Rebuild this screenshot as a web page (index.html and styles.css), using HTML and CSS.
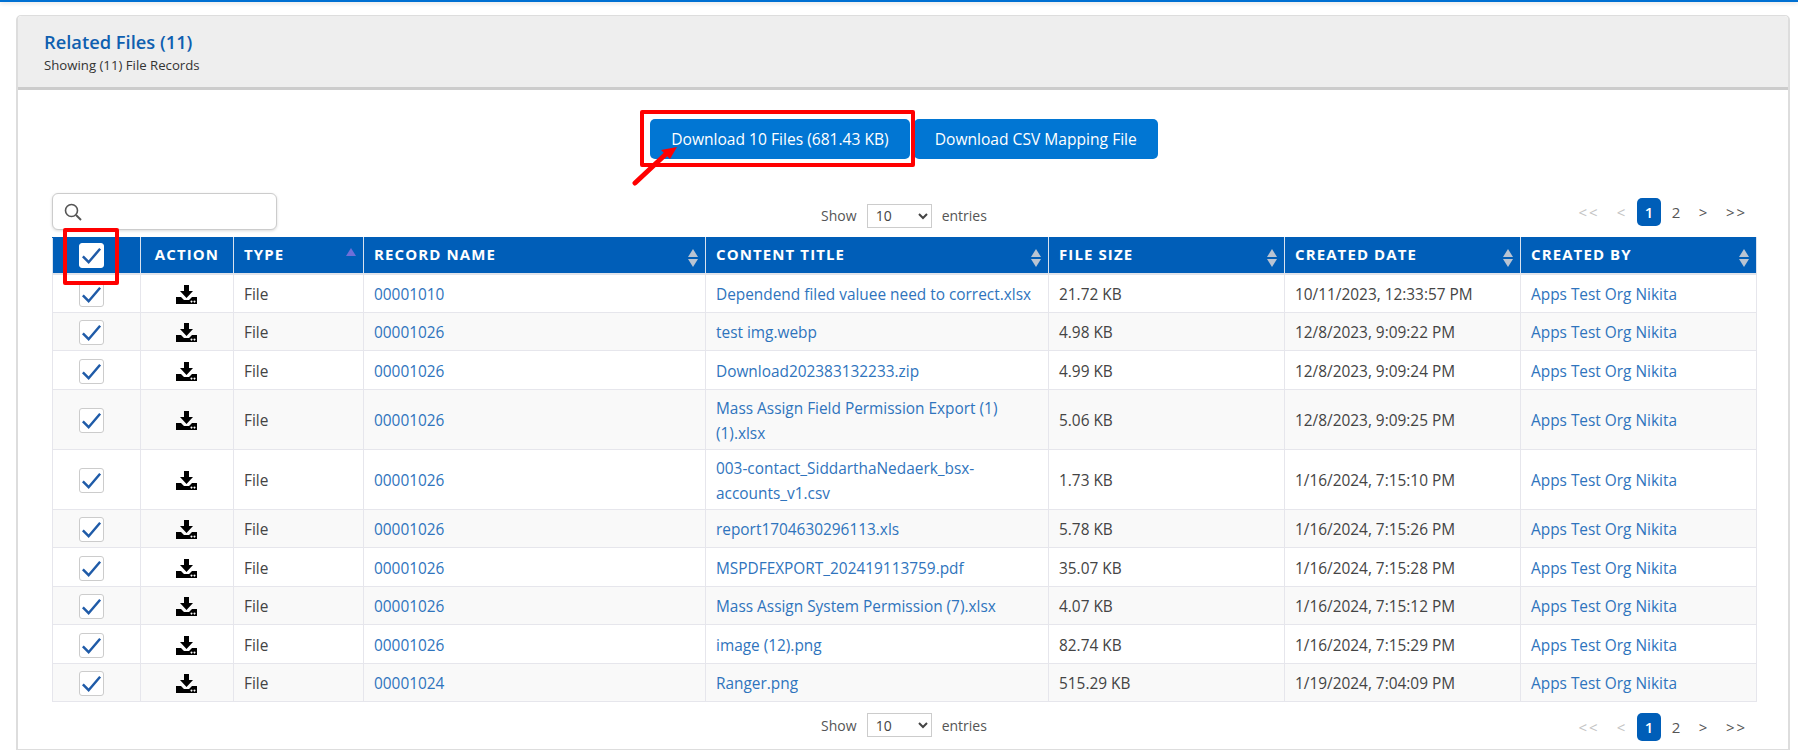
FILE: index.html
```html
<!DOCTYPE html>
<html lang="en">
<head>
<meta charset="utf-8">
<title>Related Files</title>
<link rel="stylesheet" href="styles.css">
</head>
<body>
<svg class="defs" width="0" height="0" aria-hidden="true">
  <symbol id="dl" viewBox="0 0 21 19">
    <path d="M8 0h5v6h4l-6.500 7L4 6h4z"/>
    <path fill-rule="evenodd" d="M0 12h5l3 3h5l3-3h5v7H0zM15.500 15.500a1 1 0 1 0 .01 0zM18.500 15.500a1 1 0 1 0 .01 0z"/>
  </symbol>
  <symbol id="chk" viewBox="0 0 24 24">
    <path d="M3 13l6 6L21 5" fill="none" stroke="currentColor" stroke-width="2.600"/>
  </symbol>
</svg>
<div class="topbar"></div>
<main class="card">
  <header class="card-head">
    <h1 class="card-title">Related Files (11)</h1>
    <p class="card-sub">Showing (11) File Records</p>
  </header>
  <div class="card-body">
    <div class="actions">
      <button class="btn" type="button">Download 10 Files (681.43 KB)</button>
      <button class="btn" type="button">Download CSV Mapping File</button>
    </div>
    <div class="toolbar">
      <div class="search">
        <svg class="search-icon" viewBox="0 0 18 18" width="18" height="18"><circle cx="7.500" cy="7.500" r="6" fill="none" stroke="#555" stroke-width="1.600"/><path d="M12 12l5 5" stroke="#555" stroke-width="2"/></svg>
      </div>
      <div class="length length-top"><span>Show</span><select class="length-select"><option>10</option></select><span>entries</span></div>
      <nav class="pager"><span class="pg off wide">&lt;&lt;</span><span class="pg off">&lt;</span><span class="pg cur">1</span><span class="pg">2</span><span class="pg arrow">&gt;</span><span class="pg arrow wide">&gt;&gt;</span></nav>
    </div>
    <table class="grid">
      <colgroup><col class="c1"><col class="c2"><col class="c3"><col class="c4"><col class="c5"><col class="c6"><col class="c6"><col class="c6"></colgroup>
      <thead>
        <tr>
          <th class="ctr chk"><span class="box head-box"><svg><use href="#chk"/></svg></span></th>
          <th class="ctr">ACTION</th>
          <th class="sorted">TYPE</th>
          <th class="sort">RECORD NAME</th>
          <th class="sort">CONTENT TITLE</th>
          <th class="sort">FILE SIZE</th>
          <th class="sort">CREATED DATE</th>
          <th class="sort">CREATED BY</th>
        </tr>
      </thead>
      <tbody>
        <tr><td class="ctr chk"><span class="box"><svg><use href="#chk"/></svg></span></td><td class="ctr"><svg class="dl"><use href="#dl"/></svg></td><td>File</td><td><a href="#">00001010</a></td><td><a href="#">Dependend filed valuee need to correct.xlsx</a></td><td>21.72 KB</td><td>10/11/2023, 12:33:57 PM</td><td><a href="#">Apps Test Org Nikita</a></td></tr>
        <tr><td class="ctr chk"><span class="box"><svg><use href="#chk"/></svg></span></td><td class="ctr"><svg class="dl"><use href="#dl"/></svg></td><td>File</td><td><a href="#">00001026</a></td><td><a href="#">test img.webp</a></td><td>4.98 KB</td><td>12/8/2023, 9:09:22 PM</td><td><a href="#">Apps Test Org Nikita</a></td></tr>
        <tr><td class="ctr chk"><span class="box"><svg><use href="#chk"/></svg></span></td><td class="ctr"><svg class="dl"><use href="#dl"/></svg></td><td>File</td><td><a href="#">00001026</a></td><td><a href="#">Download202383132233.zip</a></td><td>4.99 KB</td><td>12/8/2023, 9:09:24 PM</td><td><a href="#">Apps Test Org Nikita</a></td></tr>
        <tr><td class="ctr chk"><span class="box"><svg><use href="#chk"/></svg></span></td><td class="ctr"><svg class="dl"><use href="#dl"/></svg></td><td>File</td><td><a href="#">00001026</a></td><td><a href="#">Mass Assign Field Permission Export (1) (1).xlsx</a></td><td>5.06 KB</td><td>12/8/2023, 9:09:25 PM</td><td><a href="#">Apps Test Org Nikita</a></td></tr>
        <tr><td class="ctr chk"><span class="box"><svg><use href="#chk"/></svg></span></td><td class="ctr"><svg class="dl"><use href="#dl"/></svg></td><td>File</td><td><a href="#">00001026</a></td><td><a href="#">003-contact_SiddarthaNedaerk_bsx-accounts_v1.csv</a></td><td>1.73 KB</td><td>1/16/2024, 7:15:10 PM</td><td><a href="#">Apps Test Org Nikita</a></td></tr>
        <tr><td class="ctr chk"><span class="box"><svg><use href="#chk"/></svg></span></td><td class="ctr"><svg class="dl"><use href="#dl"/></svg></td><td>File</td><td><a href="#">00001026</a></td><td><a href="#">report1704630296113.xls</a></td><td>5.78 KB</td><td>1/16/2024, 7:15:26 PM</td><td><a href="#">Apps Test Org Nikita</a></td></tr>
        <tr><td class="ctr chk"><span class="box"><svg><use href="#chk"/></svg></span></td><td class="ctr"><svg class="dl"><use href="#dl"/></svg></td><td>File</td><td><a href="#">00001026</a></td><td><a href="#">MSPDFEXPORT_202419113759.pdf</a></td><td>35.07 KB</td><td>1/16/2024, 7:15:28 PM</td><td><a href="#">Apps Test Org Nikita</a></td></tr>
        <tr><td class="ctr chk"><span class="box"><svg><use href="#chk"/></svg></span></td><td class="ctr"><svg class="dl"><use href="#dl"/></svg></td><td>File</td><td><a href="#">00001026</a></td><td><a href="#">Mass Assign System Permission (7).xlsx</a></td><td>4.07 KB</td><td>1/16/2024, 7:15:12 PM</td><td><a href="#">Apps Test Org Nikita</a></td></tr>
        <tr><td class="ctr chk"><span class="box"><svg><use href="#chk"/></svg></span></td><td class="ctr"><svg class="dl"><use href="#dl"/></svg></td><td>File</td><td><a href="#">00001026</a></td><td><a href="#">image (12).png</a></td><td>82.74 KB</td><td>1/16/2024, 7:15:29 PM</td><td><a href="#">Apps Test Org Nikita</a></td></tr>
        <tr><td class="ctr chk"><span class="box"><svg><use href="#chk"/></svg></span></td><td class="ctr"><svg class="dl"><use href="#dl"/></svg></td><td>File</td><td><a href="#">00001024</a></td><td><a href="#">Ranger.png</a></td><td>515.29 KB</td><td>1/19/2024, 7:04:09 PM</td><td><a href="#">Apps Test Org Nikita</a></td></tr>
      </tbody>
    </table>
    <div class="toolbar toolbar-bottom">
      <div></div>
      <div class="length length-bottom"><span>Show</span><select class="length-select"><option>10</option></select><span>entries</span></div>
      <nav class="pager"><span class="pg off wide">&lt;&lt;</span><span class="pg off">&lt;</span><span class="pg cur">1</span><span class="pg">2</span><span class="pg arrow">&gt;</span><span class="pg arrow wide">&gt;&gt;</span></nav>
    </div>
  </div>
</main>
<div class="mark mark-btn"></div>
<div class="mark mark-chk"></div>
<svg class="mark-arrow" width="50" height="44" viewBox="0 0 50 44"><path d="M3 40L34 11" stroke="#f00" stroke-width="5" stroke-linecap="round"/><path d="M45 4L38 16 29 7z" fill="#f00"/></svg>
</body>
</html>
```
FILE: styles.css
```css
* { box-sizing: border-box; }
html, body { margin: 0; height: 750px; overflow: hidden; background: #fff; }
body { position: relative; font-family: "Open Sans", "Liberation Sans", sans-serif; font-size: 15.400px; color: #444; }
.defs { position: absolute; }
.topbar { height: 2px; background: #0070d2; box-shadow: 0 1px 4px rgba(0,0,0,.18); }
.card { margin: 13px 8px 0 16px; height: 735px; border: 1px solid #ddd; border-left-width: 2px; border-right-width: 2px; border-radius: 5px 5px 0 0; }
.card-head { height: 74px; padding: 11px 0 0 26px; background: #eee; border-bottom: 3px solid #ccc; border-radius: 4px 4px 0 0; }
.card-title { margin: 0; font-size: 18.300px; font-weight: 600; line-height: 30px; color: #0f5fb0; }
.card-sub { margin: 0; font-size: 13.200px; line-height: 17px; color: #333; }
.card-body { padding: 29px 32px 0 34px; }
.actions { display: flex; justify-content: center; gap: 4px; height: 40px; }
.btn { height: 40px; padding: 0 21px; border: 0; border-radius: 5px; background: #0176d3; color: #fff; font: 15.600px "Open Sans", sans-serif; }
.toolbar { display: grid; grid-template-columns: 225px 1fr 225px; align-items: center; height: 37px; margin: 34px 0 7px; }
.search { position: relative; height: 37px; border: 1px solid #ccc; border-radius: 6px; background: #fff; box-shadow: 0 1px 3px rgba(0,0,0,.15); }
.search-icon { position: absolute; left: 11px; top: 9px; }
.length { display: flex; justify-content: center; align-items: center; gap: 10px; color: #555; font-size: 14px; }
.length-top { margin-top: 8px; }
.length-bottom { margin-top: -4px; }
.length-select { width: 65px; height: 24px; padding: 0 4px; border: 1px solid #ccc; background: #fff; color: #444; font: 14px "Open Sans", sans-serif; border-radius: 0; }
.pager { display: flex; justify-content: flex-end; align-items: center; }
.pg { width: 26px; text-align: center; color: #555; font-size: 15px; }
.pg.off { color: #c4c4c4; width: 20px; margin-right: 6px; }
.pg.off.wide { width: 28px; margin-right: 8px; }
.pg.wide { letter-spacing: 2px; }
.pg.arrow { width: 28px; }
.pg.arrow.wide { width: 39px; }
.pg.cur { width: 24px; height: 28px; line-height: 28px; border-radius: 5px; background: #005eb8; color: #fff; font-weight: 600; margin-right: 2px; }
.grid { width: 1704px; table-layout: fixed; border-collapse: collapse; }
.c1 { width: 88px; } .c2 { width: 93px; } .c3 { width: 130px; } .c4 { width: 342px; } .c5 { width: 343px; } .c6 { width: 236px; }
.grid th { position: relative; height: 36px; padding: 0 10px 2px; background: #005eb8; color: #fff; font-size: 15px; font-weight: 700; letter-spacing: 1.100px; text-align: left; border: 1px solid #d8e2ef; border-top-color: #005eb8; border-bottom: 2px solid #e2e4ea; }
.grid th.ctr { text-align: center; padding: 0 0 2px; }
.grid td.ctr { text-align: center; padding: 0 2px 0 0; }
.grid th.chk, .grid td.chk { padding: 0 11px 0 0; }
.grid td { height: 38.500px; padding: 6px 10px 3px; line-height: 25px; border: 1px solid #e6e6ec; }
.grid tbody tr:nth-child(even) td { background: #f9f9f9; }
.grid a { color: #2f74bd; text-decoration: none; }
.sort::before, .sort::after, .sorted::after { content: ""; position: absolute; right: 7px; width: 0; height: 0; border-left: 5.500px solid transparent; border-right: 5.500px solid transparent; }
.sort::before { top: 11px; border-bottom: 8px solid #b9c4d2; }
.sort::after { top: 21px; border-top: 8px solid #b9c4d2; }
.sorted::after { top: 10px; border-bottom: 8px solid #6f6fd8; }
.box { display: inline-block; width: 25px; height: 25px; margin-top: 3px; border: 1px solid #ccc; border-radius: 3px; background: #fff; color: #1f5ba8; vertical-align: middle; }
.box svg { display: block; width: 100%; height: 100%; }
.head-box { margin-top: 0; border-color: #fff; }
.dl { display: inline-block; width: 21px; height: 19px; vertical-align: middle; fill: #000; }
.toolbar-bottom { margin: 10px 0 0; height: 30px; }
.mark { position: absolute; border: 4.500px solid #f00; border-radius: 2px; }
.mark-btn { left: 640px; top: 110px; width: 275px; height: 57px; }
.mark-chk { left: 63px; top: 228px; width: 56px; height: 57px; }
.mark-arrow { position: absolute; left: 632px; top: 143px; }
```
